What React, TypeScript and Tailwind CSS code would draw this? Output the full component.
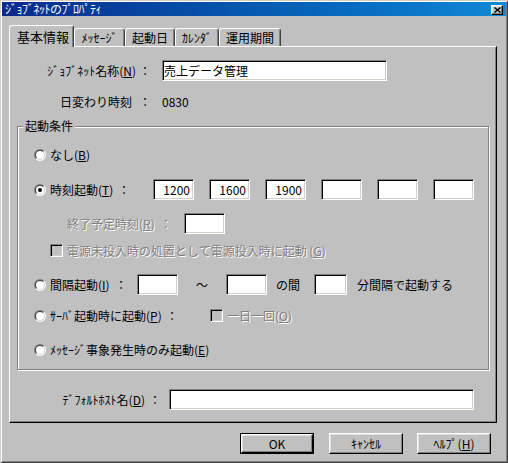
import React from "react";

const SUNKEN =
  "border border-t-[#808080] border-l-[#808080] border-r-white border-b-white shadow-[inset_1px_1px_0_#000,inset_-1px_-1px_0_#d4d0c8]";
const RAISED =
  "bg-[#c0c0c0] border border-t-white border-l-white border-r-black border-b-black shadow-[inset_-1px_-1px_0_#808080,inset_1px_1px_0_#dfdfdf]";
const DIS = "text-[#808080] [text-shadow:1px_1px_0_#fff]";

function Radio({ checked = false }: { checked?: boolean }) {
  return (
    <svg width="12" height="12" viewBox="0 0 12 12" className="shrink-0">
      <path d="M1.757 10.243A6 6 0 0 1 10.243 1.757Z" fill="#808080" />
      <path d="M10.243 1.757A6 6 0 0 1 1.757 10.243Z" fill="#ffffff" />
      <path d="M2.464 9.536A5 5 0 0 1 9.536 2.464Z" fill="#404040" />
      <path d="M9.536 2.464A5 5 0 0 1 2.464 9.536Z" fill="#d4d0c8" />
      <circle cx="6" cy="6" r="4" fill="#ffffff" />
      {checked && <circle cx="6" cy="6" r="2" fill="#000000" />}
    </svg>
  );
}

function Check() {
  return <div className={`w-[13px] h-[13px] shrink-0 bg-[#c0c0c0] ${SUNKEN}`} />;
}

function Field({
  className,
  children,
}: {
  className: string;
  children?: React.ReactNode;
}) {
  return (
    <div
      className={`h-[21px] shrink-0 bg-white flex items-center justify-end pr-[3px] ${SUNKEN} ${className}`}
    >
      {children}
    </div>
  );
}

function Tab({ className, children }: { className: string; children: React.ReactNode }) {
  return (
    <div
      className={`h-[18px] flex items-center justify-center border-t border-l border-r border-t-white border-l-white border-r-[#404040] shadow-[inset_-1px_0_0_#808080] rounded-t-[3px] ${className}`}
    >
      {children}
    </div>
  );
}

function Button({
  className,
  isDefault = false,
  children,
}: {
  className: string;
  isDefault?: boolean;
  children: React.ReactNode;
}) {
  if (isDefault) {
    return (
      <div className={`h-[21px] border border-black flex ${className}`}>
        <div className={`flex-1 flex items-center justify-center ${RAISED}`}>{children}</div>
      </div>
    );
  }
  return (
    <div className={`h-[21px] flex items-center justify-center ${RAISED} ${className}`}>
      {children}
    </div>
  );
}

export default function App() {
  return (
    <div className="w-[508px] h-[463px] overflow-hidden bg-[#c0c0c0] p-[2px] flex flex-col text-[12px] leading-[14px] text-black [font-family:'Noto_Sans_CJK_JP',sans-serif] shadow-[inset_1px_1px_0_#d4d0c8,inset_-1px_-1px_0_#404040,inset_2px_2px_0_#fff,inset_-2px_-2px_0_#808080]">
      {/* title bar */}
      <div className="h-[14px] shrink-0 flex items-center justify-between pl-[3px] pr-[3px] bg-linear-to-r from-[#0a2a8c] to-[#1088d4]">
        <span className="text-white tracking-[-0.5px] leading-[14px]">ｼﾞｮﾌﾞﾈｯﾄのﾌﾟﾛﾊﾟﾃｨ</span>
        <div className={`w-[12px] h-[10px] mt-[2px] flex items-center justify-center ${RAISED}`}>
          <svg width="7" height="6" viewBox="0 0 7 6">
            <path d="M0.5 0.5L6.5 5.5M6.5 0.5L0.5 5.5" stroke="#000" strokeWidth="1.4" />
          </svg>
        </div>
      </div>

      {/* tabs */}
      <div className="mt-[9px] h-[21px] shrink-0 flex items-end pl-[7px]">
        <div className="relative z-10 -mb-px w-[65px] h-[22px] bg-[#c0c0c0] border-t border-l border-r border-t-white border-l-white border-r-[#404040] shadow-[inset_-1px_0_0_#808080] rounded-t-[3px] pl-[7px] pt-[4px] text-[13px] leading-[14px]">
          基本情報
        </div>
        <Tab className="w-[51px]">ﾒｯｾｰｼﾞ</Tab>
        <Tab className="w-[50px]">起動日</Tab>
        <Tab className="w-[44px]">ｶﾚﾝﾀﾞ</Tab>
        <Tab className="w-[62px]">運用期間</Tab>
      </div>

      {/* panel */}
      <div className="ml-[7px] w-[488px] h-[377px] shrink-0 flex flex-col border border-t-white border-l-white border-r-black border-b-black shadow-[inset_-1px_-1px_0_#808080]">
        {/* job net name */}
        <div className="mt-[13px] h-[21px] flex items-center">
          <div className="w-[152px] pr-[11px] flex items-center justify-end">
            <span>
              ｼﾞｮﾌﾞﾈｯﾄ名称(<u>N</u>)
            </span>
            <span className="ml-[3px] w-[12px] text-center">：</span>
          </div>
          <div className={`w-[225px] h-[21px] bg-white flex items-center pl-[1px] ${SUNKEN}`}>
            売上データ管理
          </div>
        </div>

        {/* day change time */}
        <div className="mt-[10px] h-[21px] flex items-center">
          <div className="w-[152px] pr-[11px] flex items-center justify-end">
            <span>日変わり時刻</span>
            <span className="ml-[7px] w-[12px] text-center">：</span>
          </div>
          <span>0830</span>
        </div>

        {/* group box */}
        <div className="mt-[14px] ml-[7px] w-[472px] h-[244px] shrink-0 flex flex-col border border-[#808080] shadow-[inset_1px_1px_0_#fff,1px_1px_0_#fff]">
          <div className="-mt-[8px] ml-[5px] w-fit px-[2px] bg-[#c0c0c0] leading-[14px]">起動条件</div>

          {/* none */}
          <div className="mt-[11px] h-[21px] flex items-center pl-[16px]">
            <Radio />
            <span className="ml-[4px]">
              なし(<u>B</u>)
            </span>
          </div>

          {/* time start */}
          <div className="mt-[14px] h-[21px] flex items-center pl-[16px]">
            <Radio checked />
            <div className="ml-[4px] w-[103px] pr-[23px] flex items-center justify-between">
              <span>
                時刻起動(<u>T</u>)
              </span>
              <span className="w-[12px] text-center">：</span>
            </div>
            <Field className="w-[41px]">1200</Field>
            <Field className="ml-[15px] w-[41px]">1600</Field>
            <Field className="ml-[15px] w-[41px]">1900</Field>
            <Field className="ml-[15px] w-[41px]" />
            <Field className="ml-[15px] w-[41px]" />
            <Field className="ml-[15px] w-[41px]" />
          </div>

          {/* end time */}
          <div className="mt-[13px] h-[21px] flex items-center pl-[49px]">
            <div className={`w-[117px] pr-[12px] flex items-center justify-between ${DIS}`}>
              <span>
                終了予定時刻(<u>R</u>)
              </span>
              <span className="w-[12px] text-center">：</span>
            </div>
            <Field className="w-[41px]" />
          </div>

          {/* power checkbox */}
          <div className="mt-[6px] h-[21px] flex items-center pl-[32px]">
            <Check />
            <span className={`ml-[4px] ${DIS}`}>
              電源未投入時の処置として電源投入時に起動 (<u>G</u>)
            </span>
          </div>

          {/* interval */}
          <div className="mt-[13px] h-[21px] flex items-center pl-[16px]">
            <Radio />
            <div className="ml-[4px] w-[87px] pr-[10px] flex items-center justify-between">
              <span>
                間隔起動(<u>I</u>)
              </span>
              <span className="w-[12px] text-center">：</span>
            </div>
            <Field className="w-[41px]" />
            <span className="w-[48px] text-center">～</span>
            <Field className="w-[41px]" />
            <span className="ml-[9px]">の間</span>
            <Field className="ml-[14px] w-[33px]" />
            <span className="ml-[10px]">分間隔で起動する</span>
          </div>

          {/* server start */}
          <div className="mt-[10px] h-[21px] flex items-center pl-[16px]">
            <Radio />
            <div className="ml-[4px] w-[160px] pr-[32px] flex items-center justify-between">
              <span>
                ｻｰﾊﾞ起動時に起動(<u>P</u>)
              </span>
              <span className="w-[12px] text-center">：</span>
            </div>
            <Check />
            <span className={`ml-[4px] ${DIS}`}>
              一日一回(<u>O</u>)
            </span>
          </div>

          {/* message event */}
          <div className="mt-[13px] h-[21px] flex items-center pl-[16px]">
            <Radio />
            <span className="ml-[4px]">
              ﾒｯｾｰｼﾞ事象発生時のみ起動(<u>E</u>)
            </span>
          </div>
        </div>

        {/* default host */}
        <div className="mt-[19px] h-[21px] flex items-center">
          <div className="w-[159px] pr-[8px] flex items-center justify-end">
            <span>
              ﾃﾞﾌｫﾙﾄﾎｽﾄ名(<u>D</u>)
            </span>
            <span className="ml-[4px] w-[12px] text-center">：</span>
          </div>
          <Field className="w-[305px]" />
        </div>
      </div>

      {/* buttons */}
      <div className="mt-[10px] h-[21px] shrink-0 flex pl-[238px]">
        <Button className="w-[74px]" isDefault>
          OK
        </Button>
        <Button className="ml-[15px] w-[74px]">ｷｬﾝｾﾙ</Button>
        <Button className="ml-[14px] w-[74px]">
          ﾍﾙﾌﾟ(<u>H</u>)
        </Button>
      </div>
    </div>
  );
}
